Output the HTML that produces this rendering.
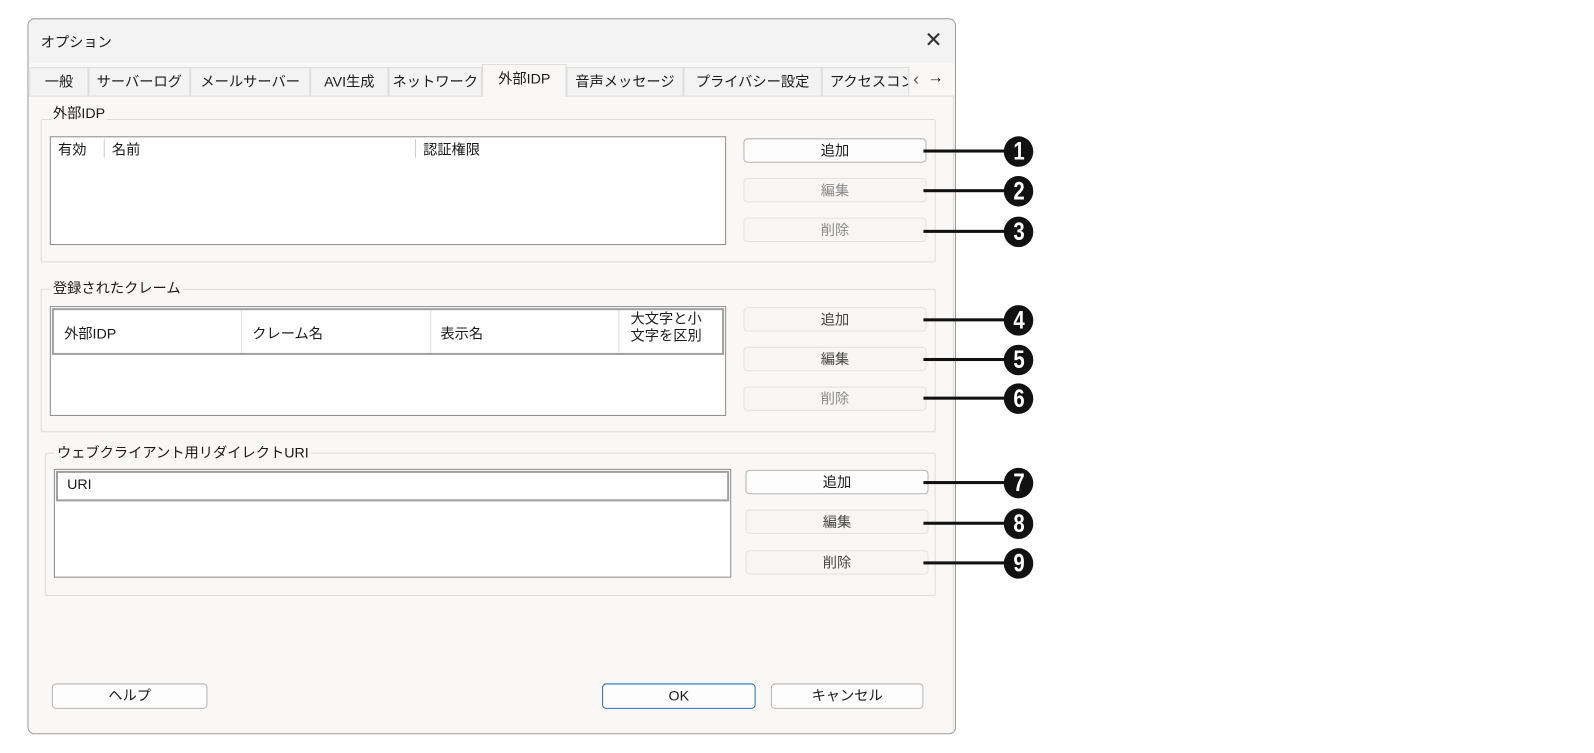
<!DOCTYPE html>
<html><head><meta charset="utf-8"><style>
html,body{margin:0;padding:0;background:#fff;width:1594px;height:753px;overflow:hidden}
body{font-family:"Liberation Sans","Noto Sans CJK JP",sans-serif;font-size:14px;color:#1a1a1a}
#s{position:absolute;left:0;top:0;width:1568px;height:740px;transform:scale(1.017);transform-origin:0 0}
.a{position:absolute;box-sizing:border-box}
.dlg{left:27px;top:18px;width:913px;height:704px;background:#f9f8f7;border:1px solid #9a9a9a;border-radius:7px}
.tab{top:66px;height:28px;border:1px solid #dcdcdc;border-bottom:none;background:#f3f3f3;text-align:center;line-height:26px;white-space:nowrap;overflow:hidden}
.grp{border:1px solid #dcdcdc;border-radius:2px}
.lg{background:#f9f8f7;padding:0 2px;line-height:16px}
.lst{background:#fff;border:1px solid #8c8c8c}
.btn{width:180px;height:24px;border:1px solid #e2e2e2;border-radius:4px;background:#f7f6f5;text-align:center;line-height:22px;color:#8a8a8a}
.btn.en{border-color:#b5b5b5;background:#fdfdfd;color:#1a1a1a}
.btn.md{color:#444}
.ln{height:3px;background:#111;width:80px;left:908px}
.c{width:29px;height:30px;border-radius:50%;background:#111;color:#fff;font-weight:bold;font-size:25px;text-align:center;line-height:30px;left:987px}
.c span{display:inline-block;transform:scaleX(.8)}
</style></head><body><div id="s">
<div class="a dlg"></div>
<div class="a" style="left:28px;top:19px;width:911px;height:43px;background:#f3f3f3;border-radius:6px 6px 0 0"></div>
<div class="a" style="left:40px;top:31px;line-height:20px">オプション</div>
<div class="a" style="left:909px;top:28px;font-size:21px;line-height:24px;color:#333;font-weight:300">✕</div>
<div class="a" style="left:28px;top:94px;width:910px;height:626px;border-top:1px solid #dcdcdc;border-right:1px solid #dcdcdc"></div>
<div class="a tab" style="left:29px;width:58px">一般</div>
<div class="a tab" style="left:87px;width:100px">サーバーログ</div>
<div class="a tab" style="left:187px;width:118px">メールサーバー</div>
<div class="a tab" style="left:305px;width:77px">AVI生成</div>
<div class="a tab" style="left:382px;width:92px">ネットワーク</div>
<div class="a tab" style="left:474px;top:63px;height:32px;width:83px;background:#f9f8f7;line-height:26px">外部IDP</div>
<div class="a tab" style="left:557px;width:115px">音声メッセージ</div>
<div class="a tab" style="left:672px;width:136px">プライバシー設定</div>
<div class="a tab" style="left:808px;width:86px;text-align:left;padding-left:7px">アクセスコン</div>
<div class="a" style="left:898px;top:68px;font-size:17px;color:#555">‹</div>
<div class="a" style="left:912px;top:68px;font-size:16px;font-weight:bold">→</div>

<div class="a grp" style="left:40px;top:117px;width:880px;height:141px"></div>
<div class="a lg" style="left:50px;top:103px">外部IDP</div>
<div class="a lst" style="left:49px;top:134px;width:665px;height:107px"></div>
<div class="a" style="left:57px;top:137px">有効</div>
<div class="a" style="left:102px;top:137px;width:1px;height:18px;background:#ccc"></div>
<div class="a" style="left:110px;top:137px">名前</div>
<div class="a" style="left:408px;top:137px;width:1px;height:18px;background:#ccc"></div>
<div class="a" style="left:416px;top:137px">認証権限</div>
<div class="a btn en" style="left:731px;top:136px">追加</div>
<div class="a btn" style="left:731px;top:175px">編集</div>
<div class="a btn" style="left:731px;top:214px">削除</div>

<div class="a grp" style="left:40px;top:284px;width:880px;height:141px"></div>
<div class="a lg" style="left:50px;top:275px">登録されたクレーム</div>
<div class="a lst" style="left:49px;top:301px;width:665px;height:108px"></div>
<div class="a" style="left:51px;top:303px;width:661px;height:46px;border:2px solid #a0a0a0;background:#fff"></div>
<div class="a" style="left:237px;top:305px;width:1px;height:42px;background:#e3e3e3"></div>
<div class="a" style="left:423px;top:305px;width:1px;height:42px;background:#e3e3e3"></div>
<div class="a" style="left:608px;top:305px;width:1px;height:42px;background:#e3e3e3"></div>
<div class="a" style="left:63px;top:318px">外部IDP</div>
<div class="a" style="left:248px;top:318px">クレーム名</div>
<div class="a" style="left:433px;top:318px">表示名</div>
<div class="a" style="left:620px;top:305px;line-height:17px">大文字と小<br>文字を区別</div>
<div class="a btn md" style="left:731px;top:302px">追加</div>
<div class="a btn md" style="left:731px;top:341px">編集</div>
<div class="a btn" style="left:731px;top:380px">削除</div>

<div class="a grp" style="left:44px;top:445px;width:876px;height:141px"></div>
<div class="a lg" style="left:54px;top:437px">ウェブクライアント用リダイレクトURI</div>
<div class="a lst" style="left:53px;top:461px;width:666px;height:107px"></div>
<div class="a" style="left:55px;top:463px;width:662px;height:30px;border:2px solid #a0a0a0;background:#fff"></div>
<div class="a" style="left:66px;top:468px">URI</div>
<div class="a btn en" style="left:733px;top:462px">追加</div>
<div class="a btn md" style="left:733px;top:501px">編集</div>
<div class="a btn md" style="left:733px;top:541px">削除</div>

<div class="a btn en" style="left:51px;top:672px;width:153px;height:25px">ヘルプ</div>
<div class="a btn en" style="left:592px;top:672px;width:151px;height:25px;border-color:#2a6fb8">OK</div>
<div class="a btn en" style="left:758px;top:672px;width:150px;height:25px">キャンセル</div>

<div class="a ln" style="top:147px"></div><div class="a c" style="top:134px"><span>1</span></div>
<div class="a ln" style="top:186px"></div><div class="a c" style="top:173px"><span>2</span></div>
<div class="a ln" style="top:226px"></div><div class="a c" style="top:213px"><span>3</span></div>
<div class="a ln" style="top:313px"></div><div class="a c" style="top:300px"><span>4</span></div>
<div class="a ln" style="top:352px"></div><div class="a c" style="top:339px"><span>5</span></div>
<div class="a ln" style="top:390px"></div><div class="a c" style="top:377px"><span>6</span></div>
<div class="a ln" style="top:473px"></div><div class="a c" style="top:460px"><span>7</span></div>
<div class="a ln" style="top:513px"></div><div class="a c" style="top:500px"><span>8</span></div>
<div class="a ln" style="top:552px"></div><div class="a c" style="top:539px"><span>9</span></div>
</div></body></html>
